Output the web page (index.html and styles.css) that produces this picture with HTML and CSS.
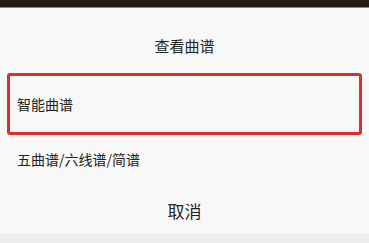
FILE: index.html
```html
<!DOCTYPE html>
<html lang="zh-CN">
<head>
    <meta charset="UTF-8">
    <meta name="viewport" content="width=device-width, initial-scale=1.0">
    <title>查看曲谱</title>
    <link rel="stylesheet" href="styles.css">
</head>
<body>
    <div class="top-bar"></div>

    <!-- Action sheet -->
    <div class="sheet">
        <div class="sheet-title">查看曲谱</div>
        <div class="sheet-item sheet-item-marked">智能曲谱</div>
        <div class="sheet-item">五曲谱/六线谱/简谱</div>
        <div class="sheet-cancel">取消</div>
    </div>
</body>
</html>
```

FILE: styles.css
```css
/* Reset and base styles */
* {
    margin: 0;
    padding: 0;
    box-sizing: border-box;
    font-family: "Noto Sans CJK SC", "Noto Sans", sans-serif;
}

body {
    background-color: #eeeeee;
    width: 369px;
    height: 243px;
    overflow: hidden;
    color: #222;
}

.top-bar {
    height: 8px;
    background-color: #231d17;
    border-bottom: 1px solid #8a8580;
}

/* Action sheet */
.sheet {
    height: 226px;
    background-color: #f8f8f8;
    display: flex;
    flex-direction: column;
}

.sheet-title {
    height: 65px;
    padding-top: 9px;
    display: flex;
    align-items: center;
    justify-content: center;
    font-size: 15px;
}

.sheet-item {
    height: 48px;
    display: flex;
    align-items: center;
    padding-left: 17px;
    font-size: 14px;
}

.sheet-item-marked {
    height: 62px;
    width: 355px;
    margin-left: 7px;
    padding-left: 7px;
    border: 3px solid #dc2f2a;
    border-radius: 3px;
}

.sheet-cancel {
    flex: 1;
    padding-top: 3px;
    display: flex;
    align-items: center;
    justify-content: center;
    font-size: 17px;
}
```
